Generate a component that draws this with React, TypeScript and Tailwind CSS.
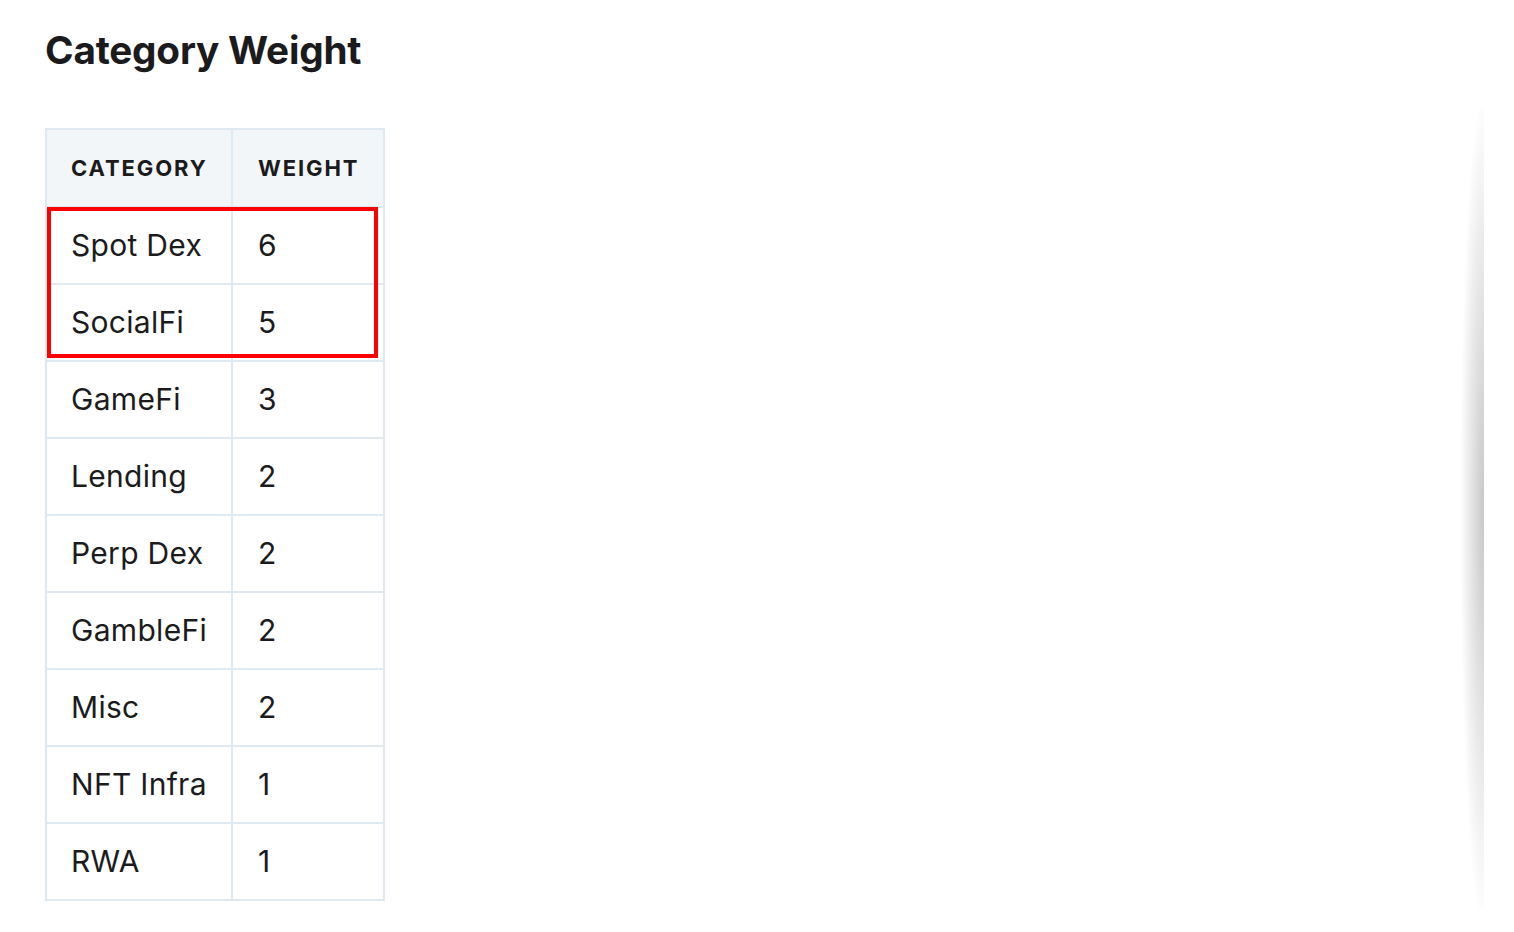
const rows: [string, number][] = [
  ["Spot Dex", 6],
  ["SocialFi", 5],
  ["GameFi", 3],
  ["Lending", 2],
  ["Perp Dex", 2],
  ["GambleFi", 2],
  ["Misc", 2],
  ["NFT Infra", 1],
  ["RWA", 1],
];

export default function App() {
  return (
    <div className="relative h-[932px] w-[1514px] overflow-hidden bg-white font-['Inter',sans-serif] text-[#1b1b1d]">
      <div className="pl-[45px] pt-[26px]">
        <h2 className="text-[38.7px] font-bold leading-[48px] tracking-[-0.2px]">Category Weight</h2>

        {/* table */}
        <div className="relative mt-[54px] w-[340px]">
          <table className="border-collapse">
            <thead>
              <tr className="bg-[#f3f6f9]">
                <th className="h-[78px] w-[187px] border-2 border-[#dfe9f1] pl-[24px] text-left text-[22px] font-bold uppercase tracking-[1.9px]">
                  Category
                </th>
                <th className="h-[78px] w-[153px] border-2 border-[#dfe9f1] pl-[25px] text-left text-[22px] font-bold uppercase tracking-[1.9px]">
                  Weight
                </th>
              </tr>
            </thead>
            <tbody>
              {rows.map(([name, w]) => (
                <tr key={name}>
                  <td className="h-[77px] border-2 border-[#dfe9f1] pl-[24px] text-[30px] tracking-[0.3px]">{name}</td>
                  <td className="h-[77px] border-2 border-[#dfe9f1] pl-[25px] text-[30px]">{w}</td>
                </tr>
              ))}
            </tbody>
          </table>
          {/* highlight */}
          <div className="pointer-events-none absolute left-[2px] top-[79px] h-[151px] w-[331px] border-4 border-[#ff0000]" />
        </div>
      </div>

      {/* side panel edge shadow */}
      <div className="absolute left-[1440px] top-[110px] h-[800px] w-[44px] bg-[radial-gradient(ellipse_24px_420px_at_100%_50%,rgba(0,0,0,0.22),rgba(0,0,0,0))]" />
    </div>
  );
}
